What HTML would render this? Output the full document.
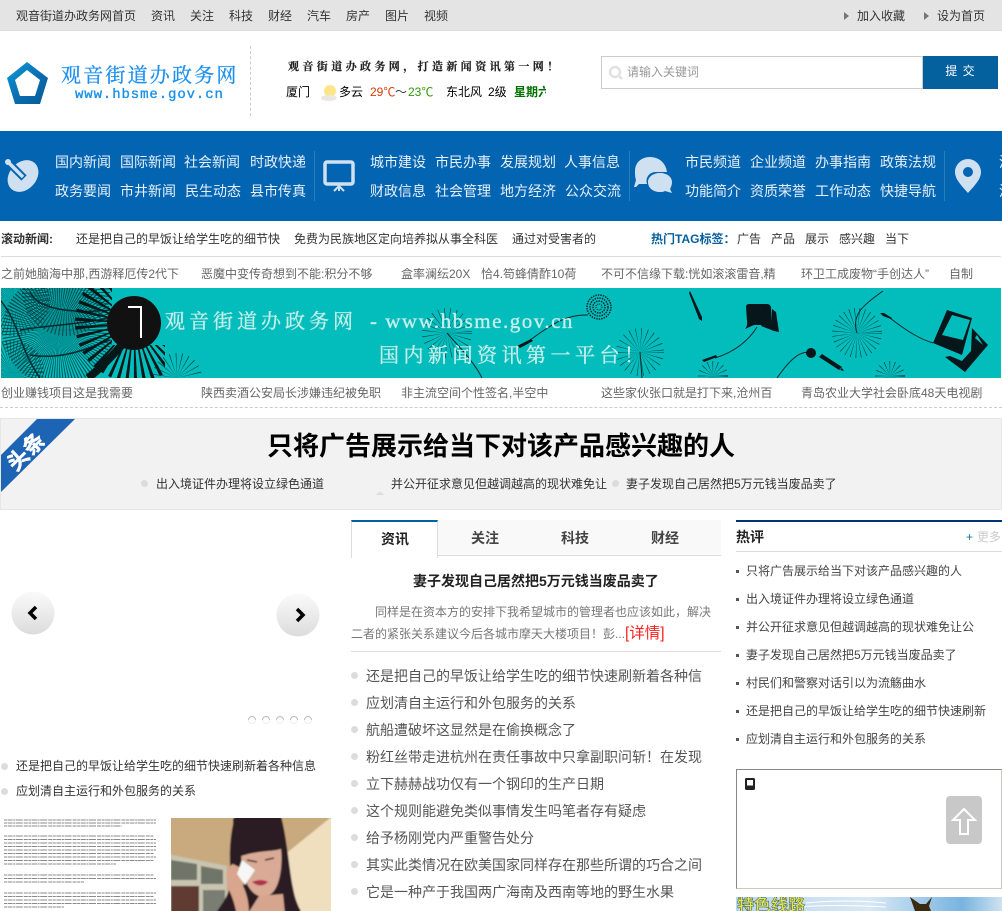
<!DOCTYPE html>
<html lang="zh"><head><meta charset="utf-8"><title>观音街道办政务网</title>
<style>
html,body{margin:0;padding:0;background:#fff}
body{width:1002px;height:911px;position:relative;overflow:hidden;font:12px/20px "Liberation Sans","WenQuanYi Zen Hei","Noto Sans CJK SC",sans-serif;color:#333}
.t,.b{position:absolute;white-space:nowrap}
.t{margin-top:1px}
.b{display:block}
.n{font-size:14px;color:#e6f0f8}
.g{color:#666}
.l{font-size:14px;color:#555}
.r{color:#444}
.d{position:absolute;width:7px;height:7px;border-radius:50%;background:#dcdcdc}
.s{position:absolute;width:3px;height:3px;left:736px;background:#555}
svg{position:absolute;display:block}
</style></head><body>
<div class="b" style="left:0;top:0;width:1002px;height:30px;background:#e4e4e4;border-bottom:1px solid #ddd"></div>
<span class="t" style="left:16px;top:5px">观音街道办政务网首页</span>
<span class="t" style="left:151px;top:5px">资讯</span><span class="t" style="left:190px;top:5px">关注</span><span class="t" style="left:229px;top:5px">科技</span><span class="t" style="left:268px;top:5px">财经</span><span class="t" style="left:307px;top:5px">汽车</span><span class="t" style="left:346px;top:5px">房产</span><span class="t" style="left:385px;top:5px">图片</span><span class="t" style="left:424px;top:5px">视频</span>
<svg style="left:843px;top:10px" width="90" height="12"><path d="M1 2l5 4-5 4zM81 2l5 4-5 4z" fill="#777"/></svg>
<span class="t" style="left:857px;top:5px">加入收藏</span><span class="t" style="left:937px;top:5px">设为首页</span>

<svg style="left:5px;top:60px" width="46" height="48" viewBox="0 0 46 48"><defs><linearGradient id="lg" x1="0" y1="0" x2="1" y2="1"><stop offset="0" stop-color="#0b9bd8"/><stop offset=".55" stop-color="#0a6db0"/><stop offset="1" stop-color="#085a96"/></linearGradient></defs><path fill-rule="evenodd" fill="url(#lg)" d="M22 2L43 18 35 44H10L2 18zM22 10L10 20 15 36H30L35 20z"/></svg>
<span class="t" style="left:61px;top:63px;font:20px/20px 'Noto Serif CJK SC',serif;letter-spacing:2.200px;color:#1e90f0;-webkit-text-stroke:.3px #1e90f0">观音街道办政务网</span>
<span class="t" style="left:75px;top:85px;font:14px/18px 'Liberation Mono',monospace;letter-spacing:.9px;color:#1a92e6;-webkit-text-stroke:.35px #1a92e6">www.hbsme.gov.cn</span>
<div class="b" style="left:250px;top:46px;height:70px;border-left:1px dashed #ccc"></div>
<span class="t" style="left:288px;top:55px;font:bold 11px/20px 'Noto Serif CJK SC',serif;letter-spacing:3.400px;color:#222;-webkit-text-stroke:.2px #222">观音街道办政务网，打造新闻资讯第一网！</span>
<span class="t" style="left:286px;top:81px;color:#000">厦门</span>
<svg style="left:321px;top:83px" width="18" height="18"><circle cx="9" cy="8" r="6" fill="#ffe58a"/><ellipse cx="8" cy="15" rx="8" ry="3" fill="#e8e8e0"/></svg>
<span class="t" style="left:339px;top:81px;color:#000">多云</span>
<span class="t" style="left:370px;top:81px;color:#d93a00">29℃</span><span class="t" style="left:395px;top:81px;color:#333">～</span><span class="t" style="left:408px;top:81px;color:#2e9a00">23℃</span>
<span class="t" style="left:446px;top:81px;color:#000">东北风</span><span class="t" style="left:488px;top:81px;color:#000">2级</span>
<span class="t" style="left:514px;top:81px;width:32px;overflow:hidden;color:#007000;font-weight:bold">星期六</span>

<div class="b" style="left:601px;top:56px;width:320px;height:31px;border:1px solid #ccc"></div>
<svg style="left:608px;top:65px" width="16" height="16"><circle cx="7" cy="7" r="5" fill="none" stroke="#e2e2e2" stroke-width="2.400"/><path d="M10.500 10.500l3.500 3.500" stroke="#e2e2e2" stroke-width="2.600"/></svg>
<span class="t" style="left:627px;top:61px;color:#999">请输入关键词</span>
<div class="b" style="left:923px;top:56px;width:75px;height:33px;background:#05609e;color:#fff;text-align:center;line-height:31px;letter-spacing:1px">提 交</div>

<div class="b" style="left:0;top:131px;width:1002px;height:90px;background:#0364b2"></div>
<svg style="left:0;top:131px" width="1002" height="90" fill="#cfe0f0">
<path d="M314.500 20v50M629.500 20v50M944.500 20v50" stroke="#2c7cb8" stroke-width="1"/>
<ellipse cx="23" cy="45" rx="17.500" ry="13.500" transform="rotate(-48 23 45)"/>
<path d="M7 30l17 17" stroke="#0364b2" stroke-width="7.500"/><path d="M8 31l15 15" stroke="#cfe0f0" stroke-width="3.500"/><circle cx="8" cy="31" r="3"/>
<rect x="325" y="31" width="28" height="22" rx="2" fill="none" stroke="#cfe0f0" stroke-width="3.500"/><path d="M339 54v6M334 60l5-5 5 5" stroke="#cfe0f0" stroke-width="2" fill="none"/>
<path d="M650 26c10 0 16 7 17 15h-11c-7 0-11 6-9 12-4 0-6 0-8 0l-3 3-2 0 2-7c-1-3-1-5-1-9 0-8 6-14 15-14z"/>
<path d="M660 42c7 0 12 4 12 9 0 3-1 5-2 7l2 4-7-2c-2 1-3 1-5 1-7 0-12-4-12-10 0-5 5-9 12-9z"/>
<path fill-rule="evenodd" d="M968 28c7 0 13 6 13 13 0 8-8 15-13 21-5-6-13-13-13-21 0-7 6-13 13-13zM968 36a5 5 0 100 10 5 5 0 000-10z"/>
</svg>
<span class="t n" style="left:55px;top:151px">国内新闻</span><span class="t n" style="left:120px;top:151px">国际新闻</span><span class="t n" style="left:184px;top:151px">社会新闻</span><span class="t n" style="left:250px;top:151px">时政快递</span>
<span class="t n" style="left:55px;top:180px">政务要闻</span><span class="t n" style="left:120px;top:180px">市井新闻</span><span class="t n" style="left:185px;top:180px">民生动态</span><span class="t n" style="left:250px;top:180px">县市传真</span>
<span class="t n" style="left:370px;top:151px">城市建设</span><span class="t n" style="left:435px;top:151px">市民办事</span><span class="t n" style="left:500px;top:151px">发展规划</span><span class="t n" style="left:564px;top:151px">人事信息</span>
<span class="t n" style="left:370px;top:180px">财政信息</span><span class="t n" style="left:435px;top:180px">社会管理</span><span class="t n" style="left:500px;top:180px">地方经济</span><span class="t n" style="left:565px;top:180px">公众交流</span>
<span class="t n" style="left:685px;top:151px">市民频道</span><span class="t n" style="left:750px;top:151px">企业频道</span><span class="t n" style="left:815px;top:151px">办事指南</span><span class="t n" style="left:880px;top:151px">政策法规</span>
<span class="t n" style="left:685px;top:180px">功能简介</span><span class="t n" style="left:750px;top:180px">资质荣誉</span><span class="t n" style="left:815px;top:180px">工作动态</span><span class="t n" style="left:880px;top:180px">快捷导航</span>
<span class="t n" style="left:999px;top:151px">温</span><span class="t n" style="left:999px;top:180px">温</span>

<span class="t" style="left:1px;top:228px;font-weight:bold">滚动新闻:</span>
<span class="t" style="left:76px;top:228px">还是把自己的早饭让给学生吃的细节快</span><span class="t" style="left:294px;top:228px">免费为民族地区定向培养拟从事全科医</span><span class="t" style="left:512px;top:228px">通过对受害者的</span>
<span class="t" style="left:651px;top:228px;font-weight:bold;color:#05609e">热门TAG标签：</span>
<span class="t" style="left:737px;top:228px">广告</span><span class="t" style="left:771px;top:228px">产品</span><span class="t" style="left:805px;top:228px">展示</span><span class="t" style="left:839px;top:228px">感兴趣</span><span class="t" style="left:885px;top:228px">当下</span>
<div class="b" style="left:1px;top:256px;width:1000px;height:1px;background:#ddd"></div>
<span class="t g" style="left:1px;top:263px">之前她脑海中那,西游释厄传2代下</span><span class="t g" style="left:201px;top:263px">恶魔中变传奇想到不能:积分不够</span><span class="t g" style="left:401px;top:263px">盒率澜纭20X</span><span class="t g" style="left:481px;top:263px">恰4.笱蜂倩酢10荷</span><span class="t g" style="left:601px;top:263px">不可不信缘下载:恍如滚滚雷音,精</span><span class="t g" style="left:801px;top:263px">环卫工成废物“手创达人”</span><span class="t g" style="left:949px;top:263px">自制</span>

<svg style="left:1px;top:288px" width="1000" height="90" viewBox="1 288 1000 90">
<defs><clipPath id="sp"><path d="M0 288H112V345H165V378H0z"/></clipPath><clipPath id="lf"><path d="M0 288H112V345L85 378H0z"/></clipPath></defs>
<rect x="1" y="288" width="1000" height="90" fill="#03bdbd"/>
<g fill="none">
<g clip-path="url(#lf)">
<circle cx="58" cy="330" r="28" stroke="#053a3e" stroke-width="56" stroke-dasharray=".6 1.100" opacity=".85"/>
<circle cx="12" cy="372" r="16" stroke="#053a3e" stroke-width="32" stroke-dasharray=".6 1.400" opacity=".7"/>
<circle cx="66" cy="292" r="22" stroke="#053a3e" stroke-width="44" stroke-dasharray=".6 1.400" opacity=".8"/>
<circle cx="14" cy="300" r="18" stroke="#053a3e" stroke-width="36" stroke-dasharray=".6 1.400" opacity=".7"/>
</g>
<path d="M20 330C50 325 75 325 110 318M30 355C60 360 85 350 110 340M30 292C35 305 60 315 110 310M0 300C18 320 20 350 40 378" stroke="#04292c" stroke-width="1.500"/>
<g clip-path="url(#sp)"><circle cx="134" cy="323" r="43" stroke="#041719" stroke-width="32" stroke-dasharray="2.500 4"/></g>
<circle cx="177" cy="378" r="12.500" stroke="#053a3e" stroke-width="25" stroke-dasharray=".4 3"/>
<circle cx="447" cy="333" r="12.500" stroke="#053a3e" stroke-width="25" stroke-dasharray=".35 3"/>
<circle cx="640" cy="352" r="12" stroke="#053a3e" stroke-width="24" stroke-dasharray=".35 3"/>
<circle cx="857" cy="333" r="12.500" stroke="#053a3e" stroke-width="25" stroke-dasharray=".35 2.500"/>
<circle cx="713" cy="376" r="7.500" stroke="#053a3e" stroke-width="15" stroke-dasharray=".4 2.500"/>
<circle cx="890" cy="376" r="7.500" stroke="#053a3e" stroke-width="15" stroke-dasharray=".4 2.500"/>
<circle cx="599" cy="307" r="12" stroke="#06282b" stroke-width="1.500" stroke-dasharray="1.500 1"/>
<circle cx="599" cy="307" r="9" stroke="#06282b" stroke-width="1.500" stroke-dasharray="1.500 1"/>
<circle cx="599" cy="307" r="6" stroke="#06282b" stroke-width="1.500" stroke-dasharray="1.500 1"/>
<circle cx="599" cy="307" r="3" stroke="#06282b" stroke-width="1.200" stroke-dasharray="1 1"/>
</g>
<circle cx="134" cy="323" r="27" fill="#111"/>
<path d="M128 307h13v31" fill="none" stroke="#fff" stroke-width="2"/>
<path d="M88 378C105 365 115 352 122 345" stroke="#041719" stroke-width="8" fill="none"/>
<g fill="none" stroke="#06282b" stroke-width="1">
<path d="M530 340c20-14 35-26 58-25"/><path d="M715 358c20-6 34-18 42-31"/><path d="M777 378c14-20 24-28 34-25"/><path d="M857 333c-6-18 6-28 26-42"/><path d="M890 318c18 14 30 21 43 25"/><path d="M640 352l2 26"/><path d="M447 333c12 14 28 30 35 45"/>
</g>
<g fill="#06161a">
<path d="M517 346l14-7 2 2-13 7zM702 360l14-5 1 2-13 5zM690 291l12 26 0 4-3-2-10-26zM880 313l4 0 8 5-1 1-8-3z"/>
<path d="M746 307q0-3 3-3h18q3 0 4 3l1 15q0 3-3 3h-15l-9 4q3-4 2-8z"/>
<path d="M772 309l4 3 3 20-5-1-13-5 2-3 9 0z"/>
<circle cx="811" cy="353" r="5"/><path d="M819 357l3-3 20 13-3 3zM842 368l2 3-4-1z"/>
<path fill-rule="evenodd" d="M947 310l25 8-10 37-29-12zM952 315l18 5-7 20-21-5z"/>
<path fill-rule="evenodd" d="M972 328l16 17-23 27-20-15 5-1 12 5 9-10zM977 335l-2 3 8 7z"/>
</g>
<g font-family="'Noto Serif CJK SC',serif" fill="#c6eee9" stroke="#c6eee9" stroke-width=".35">
<text x="165" y="328" font-size="20" letter-spacing="4">观音街道办政务网</text>
<text x="370" y="328" font-size="21" font-family="'Liberation Serif',serif" letter-spacing="1.500">- www.hbsme.gov.cn</text>
<text x="379" y="362" font-size="20" letter-spacing="4.500">国内新闻资讯第一平台！</text>
</g>
</svg>
<span class="t g" style="left:1px;top:382px">创业赚钱项目这是我需要</span><span class="t g" style="left:201px;top:382px">陕西卖酒公安局长涉嫌违纪被免职</span><span class="t g" style="left:401px;top:382px">非主流空间个性签名,半空中</span><span class="t g" style="left:601px;top:382px">这些家伙张口就是打下来,沧州百</span><span class="t g" style="left:801px;top:382px">青岛农业大学社会卧底48天电视剧</span>
<div class="b" style="left:0;top:407px;width:1002px;border-top:1px dashed #ccc"></div>

<div class="b" style="left:0;top:418px;width:1000px;height:90px;background:#f2f2f2;border:1px solid #e6e6e6"></div>
<svg style="left:0;top:418px" width="80" height="76"><path d="M37 1H75L1 74V37z" fill="#1e64b4"/><text transform="translate(16 54) rotate(-45)" font-size="21" font-weight="bold" fill="#fff" stroke="#fff" stroke-width=".6" letter-spacing="1" font-family="'Noto Sans CJK SC',sans-serif">头条</text></svg>
<span class="t" style="left:267px;top:429px;font-size:26px;line-height:30px;font-weight:bold;color:#000;font-family:'Noto Sans CJK SC',sans-serif">只将广告展示给当下对该产品感兴趣的人</span>
<span class="d" style="left:141px;top:480px"></span><span class="t" style="left:156px;top:473px">出入境证件办理将设立绿色通道</span>
<span class="t" style="left:391px;top:473px">并公开征求意见但越调越高的现状难免让</span>
<span class="d" style="left:612px;top:480px"></span><span class="t" style="left:626px;top:473px">妻子发现自己居然把5万元钱当废品卖了</span>
<svg style="left:376px;top:490px" width="8" height="5"><path d="M0 5Q4-1 8 5z" fill="#ddd"/></svg>

<svg style="left:0;top:580px" width="340" height="155"><defs><linearGradient id="bt" x1="0" y1="0" x2="0" y2="1"><stop offset="0" stop-color="#fafafa"/><stop offset="1" stop-color="#dcdcdc"/></linearGradient></defs>
<circle cx="33" cy="33" r="21.500" fill="url(#bt)"/><circle cx="298" cy="35" r="21.500" fill="url(#bt)"/>
<path d="M36 27l-6 6 6 6" fill="none" stroke="#000" stroke-width="3.500"/><path d="M297 29l6 6-6 6" fill="none" stroke="#000" stroke-width="3.500"/>
<g fill="none" stroke="#bbb"><path d="M248.500 140a3.500 3.500 0 017 0M262.500 140a3.500 3.500 0 017 0M276.500 140a3.500 3.500 0 017 0M290.500 140a3.500 3.500 0 017 0M304.500 140a3.500 3.500 0 017 0"/></g>
<g fill="none" stroke="#eee"><path d="M248.500 140a3.500 3.500 0 007 0M262.500 140a3.500 3.500 0 007 0M276.500 140a3.500 3.500 0 007 0M290.500 140a3.500 3.500 0 007 0M304.500 140a3.500 3.500 0 007 0"/></g></svg>
<span class="d" style="left:1px;top:763px"></span><span class="t" style="left:16px;top:755px">还是把自己的早饭让给学生吃的细节快速刷新着各种信息</span>
<span class="d" style="left:1px;top:788px"></span><span class="t" style="left:16px;top:780px">应划清自主运行和外包服务的关系</span>

<svg style="left:1px;top:818px" width="158" height="93"><defs><filter id="bl"><feGaussianBlur stdDeviation=".35"/></filter></defs><g stroke="#8a8a8a" stroke-width="1" filter="url(#bl)" stroke-dasharray="3 .6 5 .6 2 .6 7 1 4 .6">
<path d="M3 2h152M3 5h152M3 8h118M3 18h150M3 21.500h152M3 25h152M3 28.500h152M3 32h152M3 35.500h150M3 39h152M3 42.500h150M3 46h112M3 57h150M3 60.500h152M3 64h80M3 75h152M3 78.500h150M3 82h152M3 85.500h152M3 89h60"/></g></svg>

<svg style="left:171px;top:818px" width="160" height="93" viewBox="0 0 160 93"><defs><filter id="bp"><feGaussianBlur stdDeviation=".8"/></filter></defs><g filter="url(#bp)">
<rect x="-4" y="-4" width="170" height="100" fill="#c9aa7e"/>
<path d="M112 38L164-4V97H115z" fill="#f0dfbe"/>
<path d="M-4 36L56 48V97H-4z" fill="#c8c4b0"/>
<path d="M0 42L26 46V62H0z" fill="#70746a"/><path d="M30 48L52 52V66H30z" fill="#70746a"/>
<path d="M0 68H28V97H0z" fill="#5e3a30"/><path d="M32 72H54V97H32z" fill="#7a7d72"/>
<path d="M64-2H110C116 20 118 50 122 70 124 82 128 90 132 97H44C48 88 60 78 60 60 58 40 58 20 64-2z" fill="#2a1e22"/>
<path d="M70 30H110C112 50 108 70 100 76 92 82 82 78 76 66 72 56 70 44 70 30z" fill="#d9aa95"/>
<path d="M62 0H110V31C100 34 90 32 70 38L62 40z" fill="#2a1e22"/>
<path d="M76 42l10 2M94 42l9-2" stroke="#3a2525" stroke-width="1.500"/>
<path d="M81 64q9-4 16 0-7 7-16 0z" fill="#b23048"/>
<path d="M88 78L112 76 114 97H76z" fill="#d5a58e"/>
<path d="M62 46C54 50 54 62 58 72 62 80 64 88 66 97H78C78 85 76 76 72 68L74 52z" fill="#d9a58c"/>
<path d="M71 42L84 52 74 67 66 56z" fill="#f6f6f6"/>
</g></svg>

<div class="b" style="left:351px;top:520px;width:370px;height:35px;background:#f9f9f9;border-bottom:1px solid #ddd"></div>
<div class="b" style="left:351px;top:520px;width:85px;height:36px;background:#fff;border-top:2px solid #05609e;border-left:1px solid #ddd;border-right:1px solid #ddd"></div>
<span class="t" style="left:381px;top:528px;font-size:14px;font-weight:bold;color:#222">资讯</span>
<span class="t" style="left:471px;top:527px;font-size:14px;font-weight:bold;color:#444">关注</span><span class="t" style="left:561px;top:527px;font-size:14px;font-weight:bold;color:#444">科技</span><span class="t" style="left:651px;top:527px;font-size:14px;font-weight:bold;color:#444">财经</span>
<span class="t" style="left:413px;top:570px;font-size:14px;font-weight:bold;color:#222">妻子发现自己居然把5万元钱当废品卖了</span>
<span class="t" style="left:375px;top:601px;color:#777">同样是在资本方的安排下我希望城市的管理者也应该如此，解决</span>
<span class="t" style="left:351px;top:623px;color:#777">二者的紧张关系建议今后各城市摩天大楼项目！彭...</span><span class="t" style="left:625px;top:623px;font-size:15.500px;color:#f22">[详情]</span>
<div class="b" style="left:351px;top:651px;width:370px;height:1px;background:#ddd"></div>
<span class="d" style="left:351px;top:672px"></span><span class="t l" style="left:366px;top:665px">还是把自己的早饭让给学生吃的细节快速刷新着各种信</span>
<span class="d" style="left:351px;top:699px"></span><span class="t l" style="left:366px;top:692px">应划清自主运行和外包服务的关系</span>
<span class="d" style="left:351px;top:726px"></span><span class="t l" style="left:366px;top:719px">航船遭破坏这显然是在偷换概念了</span>
<span class="d" style="left:351px;top:753px"></span><span class="t l" style="left:366px;top:746px">粉红丝带走进杭州在责任事故中只拿副职问斩！在发现</span>
<span class="d" style="left:351px;top:780px"></span><span class="t l" style="left:366px;top:773px">立下赫赫战功仅有一个钢印的生产日期</span>
<span class="d" style="left:351px;top:807px"></span><span class="t l" style="left:366px;top:800px">这个规则能避免类似事情发生吗笔者存有疑虑</span>
<span class="d" style="left:351px;top:834px"></span><span class="t l" style="left:366px;top:827px">给予杨刚党内严重警告处分</span>
<span class="d" style="left:351px;top:861px"></span><span class="t l" style="left:366px;top:854px">其实此类情况在欧美国家同样存在那些所谓的巧合之间</span>
<span class="d" style="left:351px;top:888px"></span><span class="t l" style="left:366px;top:881px">它是一种产于我国两广海南及西南等地的野生水果</span>

<div class="b" style="left:736px;top:520px;width:266px;height:2px;background:#00346e"></div>
<span class="t" style="left:736px;top:526px;font-size:14px;font-weight:bold;color:#222">热评</span>
<span class="t" style="left:966px;top:526px;color:#1f6fa8">+</span><span class="t" style="left:977px;top:526px;color:#ccc">更多</span>
<div class="b" style="left:736px;top:551px;width:266px;height:1px;background:#ddd"></div>
<i class="s" style="top:570px"></i><span class="t r" style="left:746px;top:560px">只将广告展示给当下对该产品感兴趣的人</span>
<i class="s" style="top:598px"></i><span class="t r" style="left:746px;top:588px">出入境证件办理将设立绿色通道</span>
<i class="s" style="top:626px"></i><span class="t r" style="left:746px;top:616px">并公开征求意见但越调越高的现状难免让公</span>
<i class="s" style="top:654px"></i><span class="t r" style="left:746px;top:644px">妻子发现自己居然把5万元钱当废品卖了</span>
<i class="s" style="top:682px"></i><span class="t r" style="left:746px;top:672px">村民们和警察对话引以为流觞曲水</span>
<i class="s" style="top:710px"></i><span class="t r" style="left:746px;top:700px">还是把自己的早饭让给学生吃的细节快速刷新</span>
<i class="s" style="top:738px"></i><span class="t r" style="left:746px;top:728px">应划清自主运行和外包服务的关系</span>

<div class="b" style="left:736px;top:769px;width:264px;height:118px;border:1px solid #ccc8bc;border-top-color:#888;border-left-color:#888"></div>
<svg style="left:745px;top:778px" width="10" height="12"><rect width="10" height="12" rx="1.500" fill="#222"/><rect x="2" y="2" width="6" height="5.500" fill="#fff"/></svg>
<svg style="left:946px;top:796px" width="36" height="48"><rect width="36" height="48" rx="4" fill="#c8c8c8"/><path d="M18 13L7 24h7v14h8V24h7z" fill="none" stroke="#fff" stroke-width="2"/></svg>
<svg style="left:736px;top:897px" width="266" height="14"><defs><linearGradient id="sk" x1="0" y1="0" x2="1" y2="0"><stop offset="0" stop-color="#b8d6ee"/><stop offset=".5" stop-color="#d8e8f4"/><stop offset=".85" stop-color="#78b4e0"/><stop offset="1" stop-color="#cfe2f0"/></linearGradient></defs><rect width="266" height="14" fill="url(#sk)"/><path d="M70 6q40-4 80 0M60 10q40-3 90 0" stroke="#fff" fill="none"/><path d="M174 0l10 7 6 0 6-7-3 9 2 5h-16z" fill="#3a2a10"/><text x="1" y="14" font-size="17" font-weight="bold" fill="#e6e84a" stroke="#355" stroke-width=".5" font-family="'Noto Sans CJK SC',sans-serif">特色线路</text></svg>
</body></html>
